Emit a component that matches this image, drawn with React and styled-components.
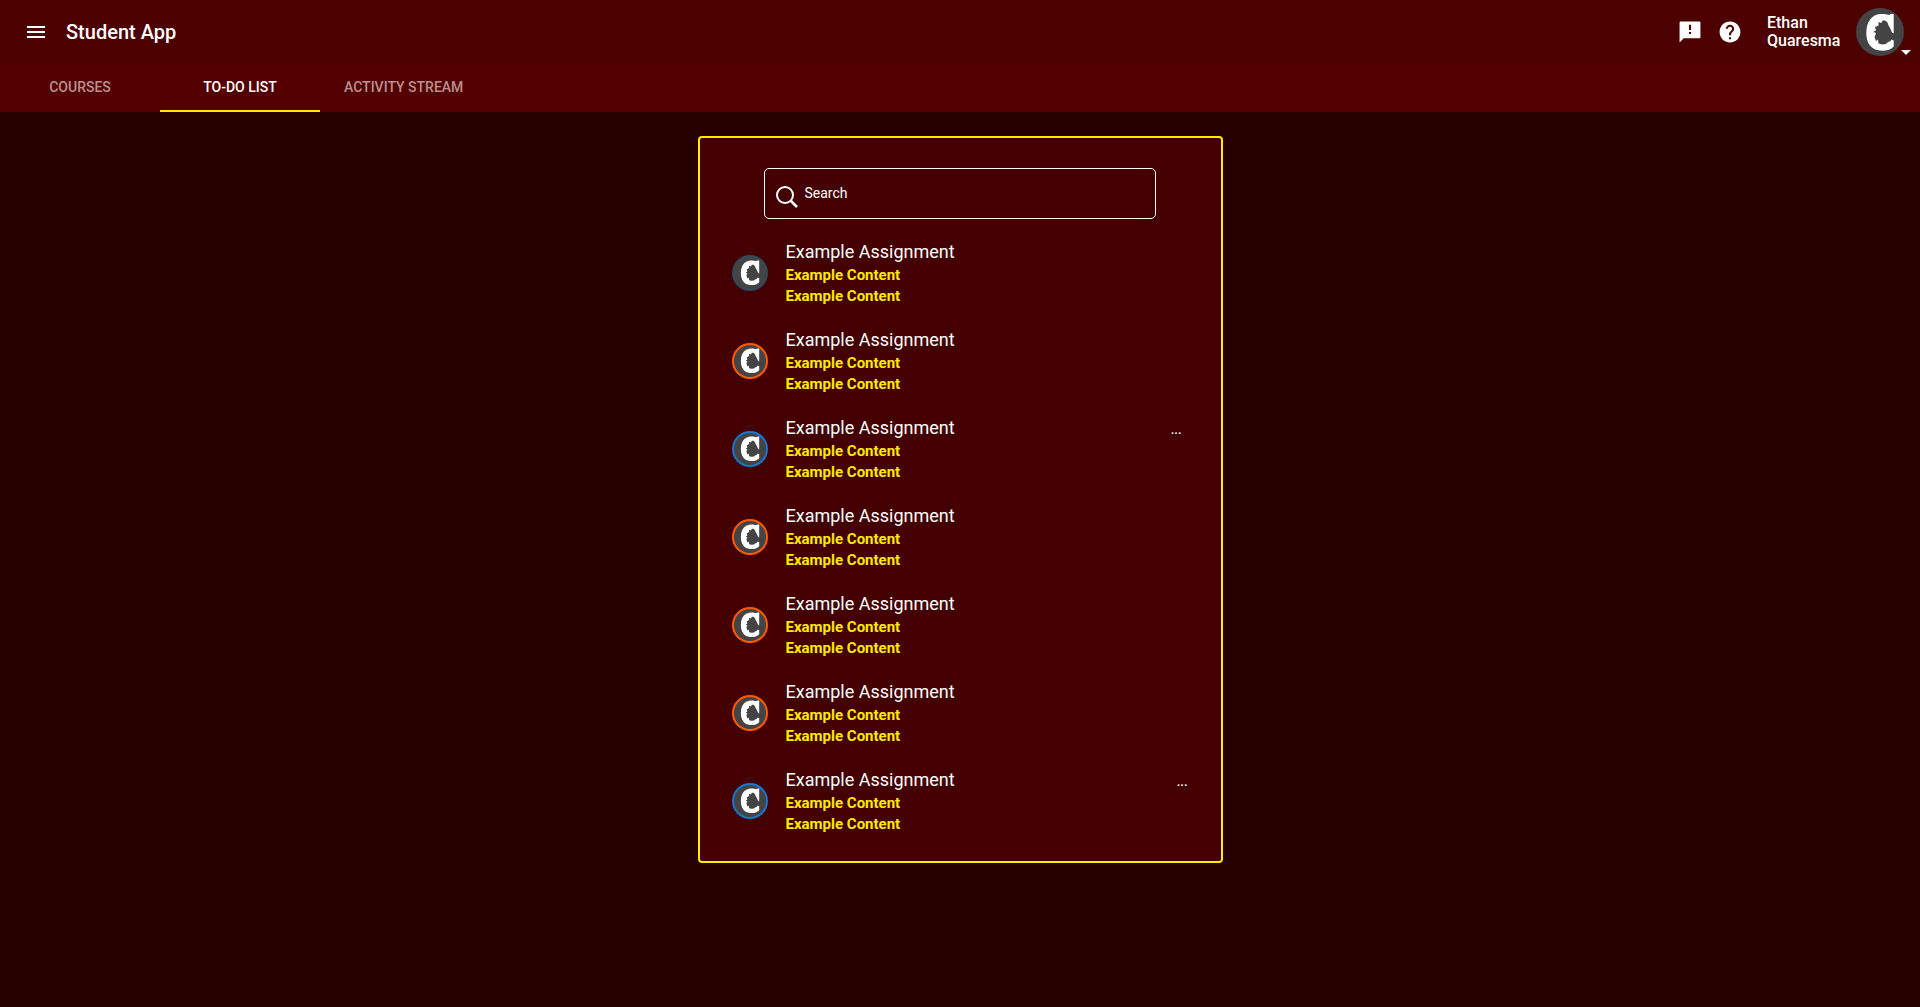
import React from "react";
import styled, { createGlobalStyle } from "styled-components";

const GlobalStyle = createGlobalStyle`
  * { box-sizing: border-box; }
  body {
    margin: 0;
    min-height: 100vh;
    background: #260000;
    color: #fff;
    font-family: Roboto, "Liberation Sans", sans-serif;
    font-size: 14px;
  }
  button, input { font: inherit; color: inherit; }
`;

const Header = styled.header`
  display: flex;
  align-items: center;
  height: 64px;
  padding: 0 16px 0 24px;
  background: #4c0000;
`;

const IconButton = styled.button`
  display: flex;
  padding: 0;
  border: 0;
  background: none;
  cursor: pointer;
`;

const Title = styled.h1`
  flex: 1;
  margin: 0 0 0 18px;
  font-size: 20px;
  line-height: 24px;
  font-weight: 500;
`;

const Tools = styled.div`
  display: flex;
  gap: 16px;
`;

const Account = styled.button`
  position: relative;
  display: flex;
  align-items: center;
  gap: 15px;
  margin-left: 25px;
  padding: 0;
  border: 0;
  background: none;
  text-align: left;
  cursor: pointer;
`;

const UserName = styled.span`
  width: 74px;
  font-size: 16px;
  line-height: 18px;
  font-weight: 500;
`;

const Caret = styled.span`
  position: absolute;
  right: -7px;
  bottom: 1px;
  border: 5px solid transparent;
  border-top-color: #fff;
  border-bottom-width: 0;
`;

const Tabs = styled.nav`
  display: flex;
  height: 48px;
  background: #550000;
`;

const Tab = styled.a`
  display: flex;
  align-items: center;
  justify-content: center;
  min-width: 160px;
  padding: 0 24px;
  border-bottom: 2px solid ${(p) => (p.$active ? "#ffeb00" : "transparent")};
  color: ${(p) => (p.$active ? "#fff" : "#bb9090")};
  font-size: 14px;
  font-weight: 500;
  text-transform: uppercase;
  text-decoration: none;
`;

const Main = styled.main`
  display: flex;
  justify-content: center;
  padding: 24px 16px;
`;

const Card = styled.section`
  width: 100%;
  max-width: 525px;
  padding: 30px 32px 16px;
  border: 2px solid #ffeb00;
  border-radius: 4px;
  background: #440000;
`;

const SearchBox = styled.label`
  display: flex;
  align-items: center;
  gap: 6px;
  max-width: 392px;
  height: 51px;
  margin: 0 32px 10px;
  padding: 0 10px;
  border: 1px solid #fff;
  border-radius: 5px;
`;

const SearchIcon = styled.svg`
  flex: none;
  width: 24px;
  height: 24px;
  margin-top: 6px;
`;

const SearchInput = styled.input`
  flex: 1;
  min-width: 0;
  padding: 0 0 2px;
  border: 0;
  outline: 0;
  background: none;
  font-size: 14px;
  &::placeholder { color: #fff; opacity: 1; }
`;

const List = styled.ul`
  margin: 0;
  padding: 0;
  list-style: none;
`;

const Item = styled.li`
  display: flex;
  align-items: center;
  gap: 18px;
  height: 88px;
`;

const ItemText = styled.div`
  flex: 1;
`;

const ItemTitle = styled.h2`
  margin: 0;
  font-size: 18px;
  line-height: 26px;
  font-weight: 400;
`;

const ItemLine = styled.p`
  margin: 0;
  color: #ffeb00;
  font-size: 15px;
  line-height: 21px;
  font-weight: 700;
`;

const More = styled.button`
  align-self: flex-start;
  margin: 17px ${(p) => (p.$edge ? 1 : 7)}px 0 0;
  padding: 0;
  border: 0;
  background: none;
  font-size: 13px;
  line-height: 16px;
  font-weight: 500;
  cursor: pointer;
`;

const AvatarSvg = styled.svg`
  flex: none;
  display: block;
`;

const Avatar = ({ size, ring }) => (
  <AvatarSvg width={size} height={size} viewBox="0 0 48 48" aria-hidden="true">
    <circle cx="24" cy="24" r="24" fill={ring || "#444"} />
    {ring && <circle cx="24" cy="24" r="21.4" fill="#444" />}
    <path
      transform={ring ? "translate(2.7 2) scale(.89)" : undefined}
      fill="#fff"
      d="M37.7 6V25.500L36 24.500 34 20 32.500 17.500 31.500 14.500 29 12.500 26.500 12.500 25.500 15 22.500 14 22.500 17.500 19 19 20 22.500 17.500 23.500 20 25.500 18.500 29 20 33 22 31.500 22.500 35.500 26 36.500 30 36 32 34 34 33.500 35.500 31.500 37.700 32.500V38.500C35 41.500 31 42.700 26 42.700 15.500 42.700 10.300 35.500 10.300 25 10.300 13.500 16 6 25.500 6 29 6 31.500 6.600 33.500 7L34.500 6Z"
    />
  </AvatarSvg>
);

const BLUE = "#1976d2";
const ORANGE = "#ff5a00";
const items = [
  { id: 1, ring: "#2f4a5e" },
  { id: 2, ring: ORANGE },
  { id: 3, ring: BLUE, more: true },
  { id: 4, ring: ORANGE },
  { id: 5, ring: ORANGE },
  { id: 6, ring: ORANGE },
  { id: 7, ring: BLUE, more: true, edge: true },
];

export default function App() {
  return (
    <>
      <GlobalStyle />
      <Header>
        <IconButton aria-label="Menu">
          <svg width="24" height="24" viewBox="0 0 24 24" fill="#fff">
            <path d="M3 18h18v-2H3v2zm0-5h18v-2H3v2zm0-7v2h18V6H3z" />
          </svg>
        </IconButton>
        <Title>Student App</Title>
        <Tools>
          <IconButton aria-label="Feedback">
            <svg width="24" height="24" viewBox="0.5 0.5 23 23" fill="#fff">
              <path d="M21 2H3c-.55 0-.99.45-.99 1L2 22l4-4h15c.55 0 1-.45 1-1V3c0-.55-.45-1-1-1zm-8 12h-2v-2h2v2zm0-4h-2V5h2v5z" />
            </svg>
          </IconButton>
          <IconButton aria-label="Help">
            <svg width="24" height="24" viewBox="0.5 0.5 23 23" fill="#fff">
              <path d="M12 2C6.480 2 2 6.480 2 12s4.480 10 10 10 10-4.480 10-10S17.520 2 12 2zm1 17h-2v-2h2v2zm2.070-7.750l-.9.920C13.450 12.900 13 13.500 13 15h-2v-.5c0-1.100.45-2.100 1.170-2.830l1.240-1.260c.37-.36.59-.86.59-1.410 0-1.100-.9-2-2-2s-2 .9-2 2H8c0-2.210 1.790-4 4-4s4 1.790 4 4c0 .88-.36 1.680-.93 2.250z" />
            </svg>
          </IconButton>
        </Tools>
        <Account>
          <UserName>Ethan Quaresma</UserName>
          <Avatar size={48} />
          <Caret />
        </Account>
      </Header>
      <Tabs>
        <Tab href="#courses">Courses</Tab>
        <Tab href="#todo" $active aria-current="page">To-do list</Tab>
        <Tab href="#activity">Activity stream</Tab>
      </Tabs>
      <Main>
        <Card>
          <SearchBox>
            <SearchIcon viewBox="0 0 24 24" fill="none" stroke="#fff" strokeWidth="2" aria-hidden="true">
              <circle cx="10" cy="10" r="8" />
              <path d="M15.500 15.500L22 22" strokeWidth="2.600" />
            </SearchIcon>
            <SearchInput type="text" placeholder="Search" aria-label="Search" />
          </SearchBox>
          <List>
            {items.map((item) => (
              <Item key={item.id}>
                <Avatar size={36} ring={item.ring} />
                <ItemText>
                  <ItemTitle>Example Assignment</ItemTitle>
                  <ItemLine>Example Content</ItemLine>
                  <ItemLine>Example Content</ItemLine>
                </ItemText>
                {item.more && <More $edge={item.edge} aria-label="More options">...</More>}
              </Item>
            ))}
          </List>
        </Card>
      </Main>
    </>
  );
}
